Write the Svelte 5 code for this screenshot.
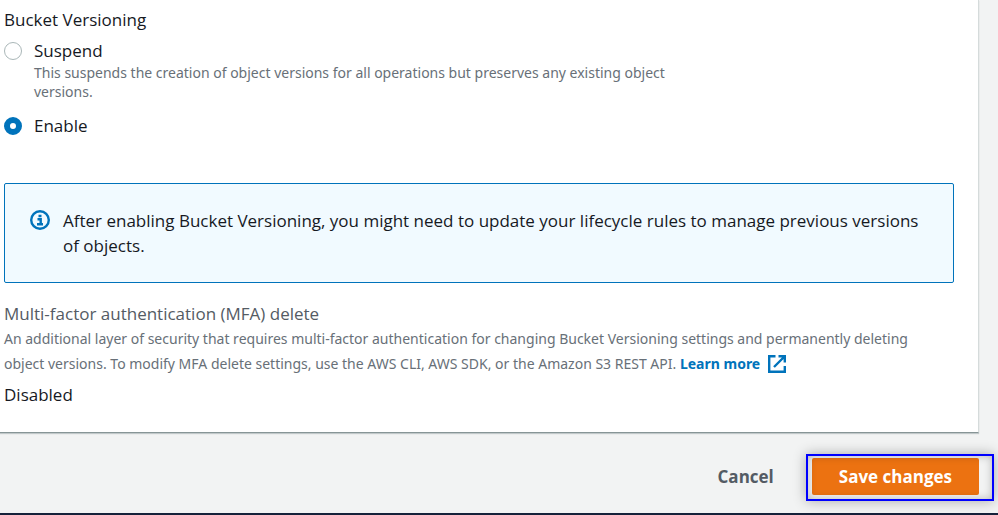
<script>
    let versioning = "enable";

    const options = [
        {
            value: "suspend",
            label: "Suspend",
            description:
                "This suspends the creation of object versions for all operations but preserves any existing object versions.",
        },
        { value: "enable", label: "Enable", description: "" },
    ];
</script>

<form class="page" on:submit|preventDefault>
    <section class="panel">
        <fieldset>
            <legend>Bucket Versioning</legend>
            {#each options as option}
                <div class="option">
                    <input
                        type="radio"
                        name="versioning"
                        id={option.value}
                        value={option.value}
                        bind:group={versioning}
                    />
                    <div class="option-text">
                        <label for={option.value}>{option.label}</label>
                        {#if option.description}
                            <p class="hint">{option.description}</p>
                        {/if}
                    </div>
                </div>
            {/each}
        </fieldset>

        <div class="alert">
            <svg class="info" viewBox="0 0 20 20" aria-hidden="true">
                <circle cx="10" cy="10" r="8.8" />
                <path d="M8.500 6h3M7.500 9.200h3.200v4.800M7 14.200h6" />
            </svg>
            <p>
                After enabling Bucket Versioning, you might need to update your
                lifecycle rules to manage previous versions of objects.
            </p>
        </div>

        <div class="mfa">
            <h2>Multi-factor authentication (MFA) delete</h2>
            <p class="mfa-description">
                An additional layer of security that requires multi-factor
                authentication for changing Bucket Versioning settings and
                permanently deleting object versions. To modify MFA delete
                settings, use the AWS CLI, AWS SDK, or the Amazon S3 REST API.
                <a href="#learn-more">
                    Learn more
                    <svg class="external" viewBox="0 0 18 18" aria-hidden="true">
                        <path d="M7.500 1.200H1.200v15.600h15.600V11M10.500 1.200h6.300v6.300M16.500 1.500L6 12" />
                    </svg>
                </a>
            </p>
            <p class="status">Disabled</p>
        </div>
    </section>

    <footer class="actions">
        <button type="button" class="cancel">Cancel</button>
        <div class="highlight">
            <button type="submit" class="save">Save changes</button>
        </div>
    </footer>

    <div class="bottom-bar"></div>
</form>

<style>
    :global(body) {
        background-color: #f2f3f3;
    }

    .page {
        font-family: "Open Sans", "Noto Sans", sans-serif;
        font-size: 17px;
        line-height: 25px;
        color: #16191f;
    }

    .panel {
        margin-right: 19px;
        padding: 7px 24px 25px 4px;
        background-color: #fff;
        border-right: 1px solid #d5dbdb;
        border-bottom: 1px solid #879596;
        box-shadow: 0 1px 1px rgba(0, 28, 36, 0.2);
    }

    fieldset {
        margin: 0;
        padding: 0;
        border: none;
    }

    legend {
        padding: 0;
        margin-bottom: 6px;
    }

    p,
    h2 {
        margin: 0;
    }

    .option {
        display: flex;
        align-items: flex-start;
        gap: 12px;
        max-width: 710px;
        margin-bottom: 12px;
    }

    .option-text {
        flex: 1;
    }

    input[type="radio"] {
        appearance: none;
        flex: none;
        width: 18px;
        height: 18px;
        margin: 4px 0 0;
        border: 1px solid #aab7b8;
        border-radius: 50%;
        background-color: #fff;
    }

    input[type="radio"]:checked {
        border: 6px solid #0073bb;
    }

    .hint {
        font-family: "Noto Sans", sans-serif;
        font-size: 14px;
        line-height: 19px;
        color: #687078;
    }

    .alert {
        display: flex;
        align-items: flex-start;
        gap: 13px;
        margin-top: 33px;
        padding: 24px 25px;
        border: 1px solid #0073bb;
        border-radius: 2px;
        background-color: #f1faff;
    }

    .info {
        flex: none;
        width: 20px;
        height: 20px;
        margin-top: 2px;
        fill: none;
        stroke: #0073bb;
        stroke-width: 2.4;
    }

    .mfa {
        margin-top: 18px;
    }

    h2 {
        font-size: 17px;
        font-weight: 400;
        line-height: 25px;
        color: #545b64;
    }

    .mfa-description {
        padding-right: 8px;
        font-family: "Noto Sans", sans-serif;
        font-size: 14px;
        color: #687078;
    }

    a {
        display: inline-flex;
        align-items: center;
        gap: 8px;
        font-weight: 700;
        color: #0073bb;
        text-decoration: none;
    }

    .external {
        width: 18px;
        height: 18px;
        fill: none;
        stroke: #0073bb;
        stroke-width: 2.4;
    }

    .status {
        margin-top: 6px;
    }

    .actions {
        display: flex;
        justify-content: flex-end;
        align-items: center;
        padding: 25px 19px 18px 0;
    }

    button {
        border: none;
        border-radius: 2px;
        font-family: inherit;
        font-size: 17px;
        font-weight: 700;
        line-height: 25px;
        cursor: pointer;
    }

    .cancel {
        padding: 6px 38px;
        background: none;
        color: #545b64;
    }

    .save {
        display: block;
        padding: 6px 27px;
        background-color: #ec7211;
        color: #fff;
    }

    .highlight {
        position: relative;
    }

    /* marker frame drawn over the primary button */
    .highlight::after {
        content: "";
        position: absolute;
        inset: -4px -15px -6px -6px;
        border: 2px solid #00f;
        box-shadow:
            0 0 12px rgba(0, 0, 0, 0.3),
            inset 0 0 8px rgba(0, 0, 0, 0.25);
        pointer-events: none;
    }

    .bottom-bar {
        height: 2px;
        background-color: #16213a;
    }
</style>
